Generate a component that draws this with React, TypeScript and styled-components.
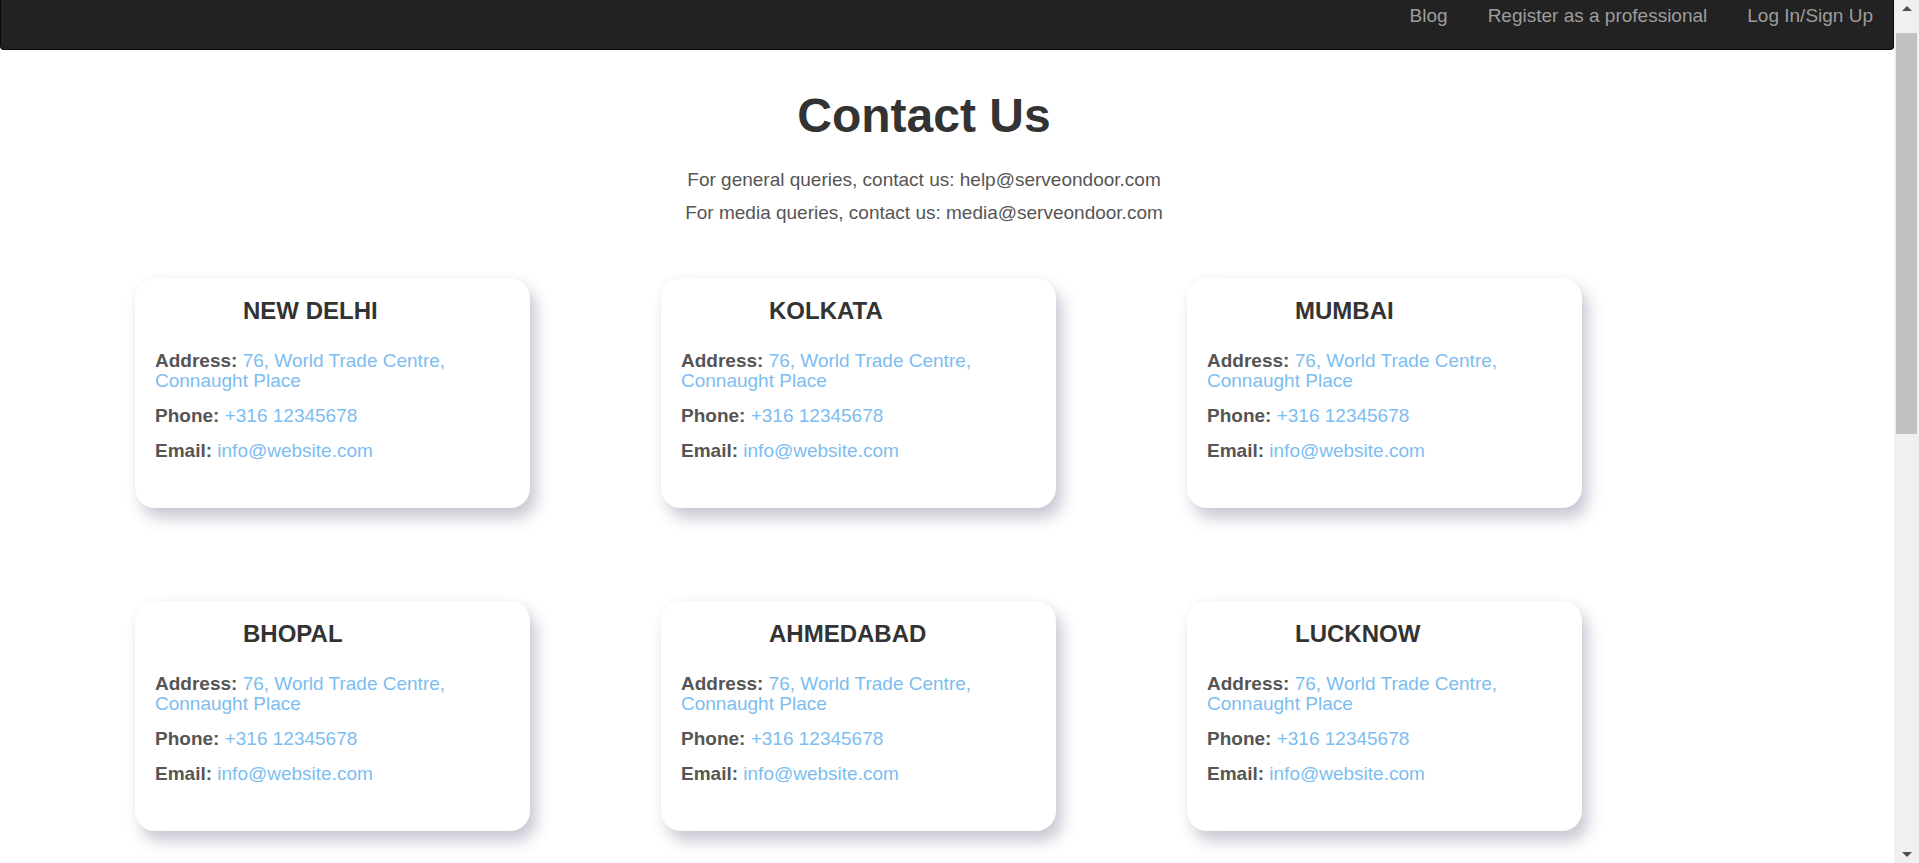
import React from "react";
import styled, { createGlobalStyle } from "styled-components";

const GlobalStyle = createGlobalStyle`
  html, body {
    margin: 0;
    padding: 0;
    background: #ffffff;
    font-family: "Liberation Sans", Arial, Helvetica, sans-serif;
  }
  * { box-sizing: border-box; }
`;

const Viewport = styled.div`
  display: flex;
  height: 100vh;
  overflow: hidden;
`;

const Page = styled.div`
  flex: 1;
  min-width: 0;
  height: 100%;
  overflow: hidden;
`;

const ScrollBar = styled.div`
  width: 25px;
  flex-shrink: 0;
  height: 100%;
  background: #f0f0f0;
  display: flex;
  flex-direction: column;
`;

const ScrollButton = styled.div`
  height: 17px;
  flex-shrink: 0;
  display: flex;
  align-items: center;
  justify-content: center;
`;

const Arrow = styled.span<{ $down?: boolean }>`
  width: 0;
  height: 0;
  border-left: 5px solid transparent;
  border-right: 5px solid transparent;
  ${(p) =>
    p.$down ? "border-top: 5px solid #505050;" : "border-bottom: 5px solid #505050;"}
`;

const ScrollTrack = styled.div`
  flex: 1;
  padding: 16px 2px 0;
`;

const ScrollThumb = styled.div`
  height: 401px;
  background: #c1c1c1;
`;

const Navbar = styled.nav`
  height: 50px;
  background: #222222;
  border: 1px solid #080808;
  border-top: 0;
  border-radius: 0 0 4px 4px;
  display: flex;
  justify-content: flex-end;
  align-items: flex-start;
`;

const NavList = styled.ul`
  list-style: none;
  margin: 0;
  padding: 0;
  display: flex;
`;

const NavLink = styled.a`
  display: block;
  padding: 4px 20px;
  font-size: 19px;
  line-height: 23px;
  color: #9d9d9d;
  text-decoration: none;
  cursor: pointer;
`;

const Main = styled.main`
  padding-bottom: 40px;
`;

const Intro = styled.header`
  padding: 40px 46px 0 0;
  text-align: center;
`;

const Title = styled.h1`
  margin: 0 0 25px;
  font-size: 48px;
  line-height: 52.8px;
  font-weight: 700;
  color: #333333;
`;

const Note = styled.p`
  margin: 0 0 10px;
  font-size: 19px;
  line-height: 23px;
  color: #555555;
`;

const CardGrid = styled.section`
  margin: 54px 0 0 135px;
  display: grid;
  grid-template-columns: repeat(3, 395px);
  column-gap: 131px;
  row-gap: 93px;
`;

const Card = styled.article`
  background: #ffffff;
  border-radius: 20px;
  padding: 20px 20px 47px;
  box-shadow: 6px 10px 15px rgba(80, 70, 110, 0.3), 0 -2px 8px rgba(0, 0, 0, 0.025);
`;

const City = styled.h2`
  margin: 0 0 27px 88px;
  font-size: 24px;
  line-height: 26px;
  font-weight: 700;
  color: #333333;
`;

const Lines = styled.div`
  display: flex;
  flex-direction: column;
  gap: 15px;
`;

const Line = styled.p`
  margin: 0;
  font-size: 19px;
  line-height: 20px;
  color: #7dbdf0;
  padding-right: 40px;
`;

const Label = styled.strong`
  color: #555555;
  font-weight: 700;
`;

const cities = ["NEW DELHI", "KOLKATA", "MUMBAI", "BHOPAL", "AHMEDABAD", "LUCKNOW"];

export default function App() {
  return (
    <>
      <GlobalStyle />
      <Viewport>
        <Page>
          <Navbar>
            <NavList>
              <li><NavLink>Blog</NavLink></li>
              <li><NavLink>Register as a professional</NavLink></li>
              <li><NavLink>Log In/Sign Up</NavLink></li>
            </NavList>
          </Navbar>
          <Main>
            <Intro>
              <Title>Contact Us</Title>
              <Note>For general queries, contact us: help@serveondoor.com</Note>
              <Note>For media queries, contact us: media@serveondoor.com</Note>
            </Intro>
            <CardGrid>
              {cities.map((c) => (
                <Card key={c}>
                  <City>{c}</City>
                  <Lines>
                    <Line>
                      <Label>Address:</Label> 76, World Trade Centre, Connaught Place
                    </Line>
                    <Line>
                      <Label>Phone:</Label> +316 12345678
                    </Line>
                    <Line>
                      <Label>Email:</Label> info@website.com
                    </Line>
                  </Lines>
                </Card>
              ))}
            </CardGrid>
          </Main>
        </Page>
        <ScrollBar aria-hidden="true">
          <ScrollButton><Arrow /></ScrollButton>
          <ScrollTrack><ScrollThumb /></ScrollTrack>
          <ScrollButton><Arrow $down /></ScrollButton>
        </ScrollBar>
      </Viewport>
    </>
  );
}
